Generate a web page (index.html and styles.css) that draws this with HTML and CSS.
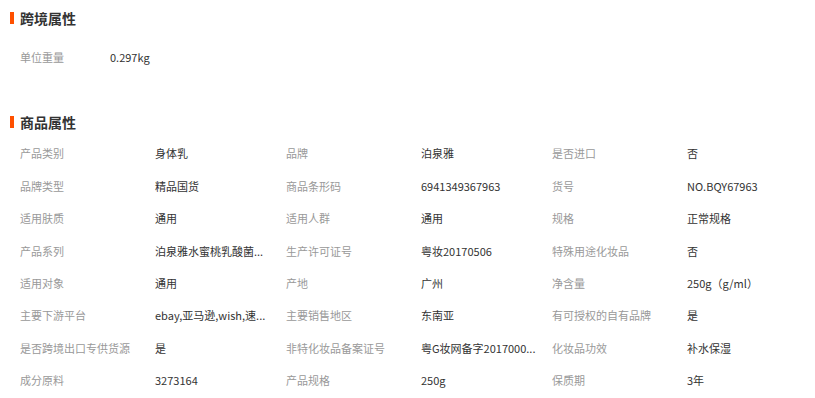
FILE: index.html
```html
<!DOCTYPE html>
<html lang="zh-CN">
<head>
<meta charset="utf-8">
<title>属性</title>
<link rel="stylesheet" href="styles.css">
</head>
<body>
<div class="page">
  <section class="section">
    <h2 class="section-title">跨境属性</h2>
    <div class="cross">
      <span class="label cross-label">单位重量</span>
      <span class="value">0.297kg</span>
    </div>
  </section>
  <section class="section section-goods">
    <h2 class="section-title">商品属性</h2>
    <div class="grid">
      <span class="label">产品类别</span><span class="value">身体乳</span>
      <span class="label">品牌</span><span class="value">泊泉雅</span>
      <span class="label">是否进口</span><span class="value">否</span>

      <span class="label">品牌类型</span><span class="value">精品国货</span>
      <span class="label">商品条形码</span><span class="value">6941349367963</span>
      <span class="label">货号</span><span class="value">NO.BQY67963</span>

      <span class="label">适用肤质</span><span class="value">通用</span>
      <span class="label">适用人群</span><span class="value">通用</span>
      <span class="label">规格</span><span class="value">正常规格</span>

      <span class="label">产品系列</span><span class="value">泊泉雅水蜜桃乳酸菌...</span>
      <span class="label">生产许可证号</span><span class="value">粤妆20170506</span>
      <span class="label">特殊用途化妆品</span><span class="value">否</span>

      <span class="label">适用对象</span><span class="value">通用</span>
      <span class="label">产地</span><span class="value">广州</span>
      <span class="label">净含量</span><span class="value">250g（g/ml）</span>

      <span class="label">主要下游平台</span><span class="value">ebay,亚马逊,wish,速...</span>
      <span class="label">主要销售地区</span><span class="value">东南亚</span>
      <span class="label">有可授权的自有品牌</span><span class="value">是</span>

      <span class="label">是否跨境出口专供货源</span><span class="value">是</span>
      <span class="label">非特化妆品备案证号</span><span class="value">粤G妆网备字2017000...</span>
      <span class="label">化妆品功效</span><span class="value">补水保湿</span>

      <span class="label">成分原料</span><span class="value">3273164</span>
      <span class="label">产品规格</span><span class="value">250g</span>
      <span class="label">保质期</span><span class="value">3年</span>
    </div>
  </section>
</div>
</body>
</html>
```
FILE: styles.css
```css
html, body {
  margin: 0;
  padding: 0;
  background: #ffffff;
}
body {
  font-family: "Noto Sans CJK SC", "Noto Sans", sans-serif;
  font-size: 11px;
  color: #333333;
}
.page {
  padding-top: 8px;
}
.section-title {
  margin: 0 0 0 10px;
  height: 20px;
  line-height: 20px;
  font-size: 14px;
  font-weight: bold;
  color: #333333;
  display: flex;
  align-items: center;
  gap: 6px;
}
.section-title::before {
  content: "";
  width: 4px;
  height: 12px;
  background: #ff5000;
}
.cross {
  margin-top: 13px;
  display: flex;
  align-items: center;
  height: 32px;
  padding-left: 20px;
}
.cross-label {
  width: 90px;
}
.section-goods {
  margin-top: 39px;
}
.grid {
  margin-top: 5px;
  padding-left: 20px;
  display: grid;
  grid-template-columns: 135px 131px 135px 131px 135px 131px;
  grid-auto-rows: 32.45px;
  align-items: center;
}
.label {
  color: #999999;
  white-space: nowrap;
}
.value {
  color: #333333;
  white-space: nowrap;
}
```
